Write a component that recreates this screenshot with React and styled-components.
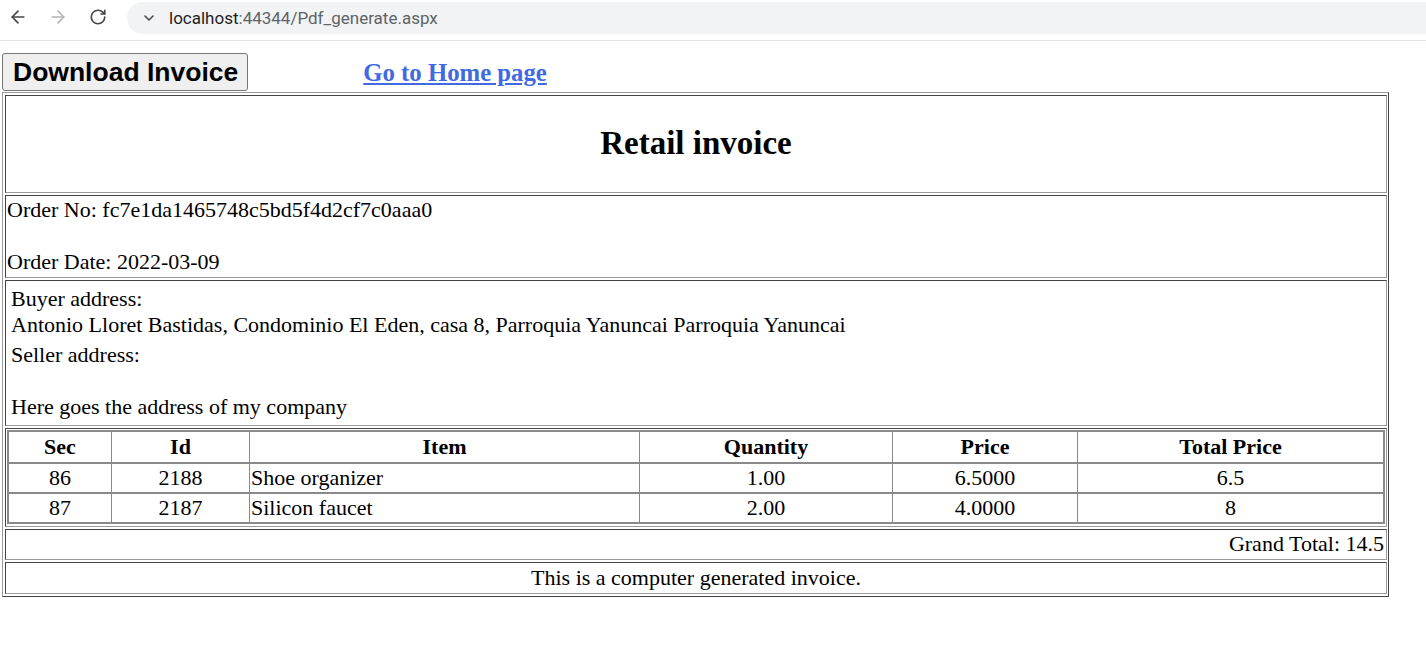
import React from "react";
import styled, { createGlobalStyle } from "styled-components";
import { ArrowLeft, ArrowRight, RotateCw, ChevronDown } from "lucide-react";

const Global = createGlobalStyle`
  html, body { margin: 0; padding: 0; background: #fff; }
  body { font-family: "Liberation Serif", "Times New Roman", serif; font-size: 22px; color: #000; }
  * { box-sizing: border-box; }
`;

const Chrome = styled.div`
  height: 41px;
  display: flex;
  align-items: flex-start;
  border-bottom: 1px solid #e3e3e3;
  background: #fff;
`;

const NavButton = styled.div`
  width: 40px;
  height: 34px;
  display: flex;
  align-items: center;
  justify-content: center;
  color: ${(p) => (p.$disabled ? "#b4b4b4" : "#474747")};
`;

const NavGroup = styled.div`
  display: flex;
  margin-left: -2px;
`;

const Omnibox = styled.div`
  flex: 1;
  margin-left: 9px;
  margin-top: 2px;
  height: 32px;
  border-radius: 16px 0 0 16px;
  background: #f1f3f4;
  display: flex;
  align-items: center;
  padding-left: 14px;
  gap: 12px;
  font-family: Roboto, "Noto Sans", sans-serif;
  font-size: 17px;
  color: #1f1f1f;
`;

const UrlRest = styled.span`
  color: #5f6368;
`;

const Page = styled.div`
  padding: 12px 0 0 2px;
`;

const Toolbar = styled.div`
  display: flex;
  align-items: center;
  height: 38px;
  gap: 115px;
`;

const DownloadButton = styled.button`
  height: 38px;
  padding: 0 9px 0 10px;
  font-family: "Liberation Sans", Arial, sans-serif;
  font-weight: bold;
  font-size: 26.5px;
  color: #000;
  background: #efefef;
  border: 1px solid #767676;
  border-radius: 3px;
  line-height: 1;
`;

const HomeLink = styled.a`
  font-family: "Liberation Serif", "Times New Roman", serif;
  font-weight: bold;
  font-size: 24.75px;
  color: #4169e1;
  text-decoration: underline;
  margin-top: 1px;
`;

const Invoice = styled.div`
  width: 1387px;
  margin-top: 1px;
  display: grid;
  gap: 2px;
  padding: 2px;
  border: 1px solid;
  border-color: #9a9a9a #444 #444 #9a9a9a;
`;

const Cell = styled.div`
  border: 1px solid;
  border-color: #444 #9a9a9a #9a9a9a #444;
  height: ${(p) => p.$h}px;
  padding: ${(p) => p.$pad || "1px"};
  line-height: 26px;
  display: ${(p) => (p.$flex ? "flex" : "block")};
  align-items: center;
  justify-content: ${(p) => p.$justify || "flex-start"};
`;

const Title = styled.h2`
  margin: 0 0 2px;
  font-size: 33px;
  font-weight: bold;
  line-height: 38px;
`;

const Line = styled.div`
  height: 26px;
  white-space: nowrap;
`;

const AddressBlock = styled.div`
  & + & { margin-top: 4px; }
`;

const ItemsTable = styled.table`
  width: 100%;
  table-layout: fixed;
  border-collapse: separate;
  border-spacing: 0;
  border: 2px solid #8a8a8a;
  font-size: 22px;
`;

const Col = styled.col`
  width: ${(p) => p.$w}px;
`;

const HeadCell = styled.th`
  height: 30px;
  padding: 0 1px;
  font-weight: bold;
  text-align: center;
  line-height: 26px;
  & + & { border-left: 1px solid #8a8a8a; }
`;

const DataCell = styled.td`
  height: 30px;
  padding: 0 1px 1px;
  line-height: 26px;
  text-align: ${(p) => (p.$left ? "left" : "center")};
  border-top: 2px solid #8a8a8a;
  white-space: nowrap;
  & + & { border-left: 1px solid #8a8a8a; }
`;

const rows = [
  { sec: 86, id: 2188, item: "Shoe organizer", qty: "1.00", price: "6.5000", total: "6.5" },
  { sec: 87, id: 2187, item: "Silicon faucet", qty: "2.00", price: "4.0000", total: "8" },
];

const widths = [102, 138, 390, 253, 185, 306];

export default function App() {
  return (
    <>
      <Global />
      <Chrome>
        <NavGroup>
          <NavButton>
            <ArrowLeft size={20} strokeWidth={2} />
          </NavButton>
          <NavButton $disabled>
            <ArrowRight size={20} strokeWidth={2} />
          </NavButton>
          <NavButton>
            <RotateCw size={18} strokeWidth={2.2} />
          </NavButton>
        </NavGroup>
        <Omnibox>
          <ChevronDown size={16} strokeWidth={2.4} color="#474747" />
          <span>
            localhost<UrlRest>:44344/Pdf_generate.aspx</UrlRest>
          </span>
        </Omnibox>
      </Chrome>
      <Page>
        <Toolbar>
          <DownloadButton>Download Invoice</DownloadButton>
          <HomeLink href="#">Go to Home page</HomeLink>
        </Toolbar>
        <Invoice>
          <Cell $h={98} $flex $justify="center">
            <Title>Retail invoice</Title>
          </Cell>
          <Cell $h={83} $pad="1px 1px">
            <Line>Order No: fc7e1da1465748c5bd5f4d2cf7c0aaa0</Line>
            <Line />
            <Line>Order Date: 2022-03-09</Line>
          </Cell>
          <Cell $h={146} $pad="5px 1px 3px 5px">
            <AddressBlock>
              <Line>Buyer address:</Line>
              <Line>
                Antonio Lloret Bastidas, Condominio El Eden, casa 8, Parroquia Yanuncai Parroquia Yanuncai
              </Line>
            </AddressBlock>
            <AddressBlock>
              <Line>Seller address:</Line>
              <Line />
              <Line>Here goes the address of my company</Line>
            </AddressBlock>
          </Cell>
          <Cell $h={99} $pad="1px 1px 2px 1px">
            <ItemsTable>
              <colgroup>
                {widths.map((w, i) => (
                  <Col key={i} $w={w} />
                ))}
              </colgroup>
              <thead>
                <tr>
                  <HeadCell>Sec</HeadCell>
                  <HeadCell>Id</HeadCell>
                  <HeadCell>Item</HeadCell>
                  <HeadCell>Quantity</HeadCell>
                  <HeadCell>Price</HeadCell>
                  <HeadCell>Total Price</HeadCell>
                </tr>
              </thead>
              <tbody>
                {rows.map((r) => (
                  <tr key={r.sec}>
                    <DataCell>{r.sec}</DataCell>
                    <DataCell>{r.id}</DataCell>
                    <DataCell $left>{r.item}</DataCell>
                    <DataCell>{r.qty}</DataCell>
                    <DataCell>{r.price}</DataCell>
                    <DataCell>{r.total}</DataCell>
                  </tr>
                ))}
              </tbody>
            </ItemsTable>
          </Cell>
          <Cell $h={31} $flex $justify="flex-end" $pad="0 2px 1px 1px">
            Grand Total: 14.5
          </Cell>
          <Cell $h={32} $flex $justify="center" $pad="0 1px 1px">
            This is a computer generated invoice.
          </Cell>
        </Invoice>
      </Page>
    </>
  );
}
